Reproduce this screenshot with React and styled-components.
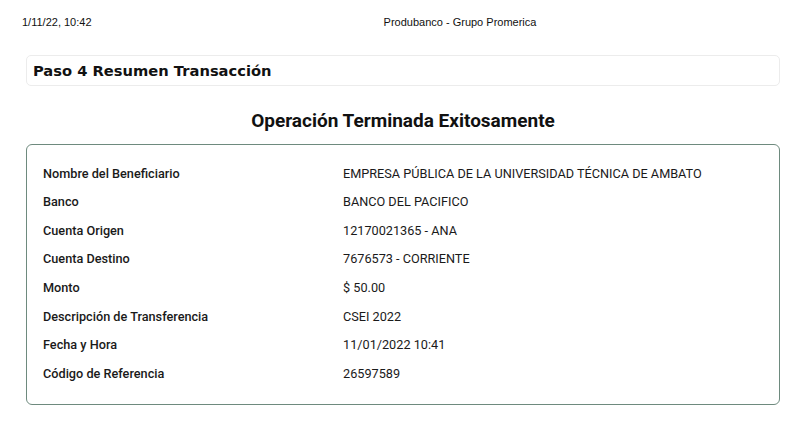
import React from "react";
import styled, { createGlobalStyle } from "styled-components";

const GlobalStyle = createGlobalStyle`
  html, body {
    margin: 0;
    padding: 0;
    background: #fff;
  }
  body {
    font-family: Roboto, "Liberation Sans", sans-serif;
    color: #111;
  }
`;

const Page = styled.div`
  width: 805px;
  height: 421px;
  padding: 14px 25px 0 22px;
  box-sizing: border-box;
`;

const PrintHeader = styled.div`
  display: grid;
  grid-template-columns: 1fr auto 1fr;
  align-items: center;
  font-family: "Liberation Sans", Arial, sans-serif;
  font-size: 11px;
  color: #111;
  height: 16px;
`;

const HeaderCenter = styled.span`
  justify-self: center;
  margin-left: 118px;
`;

const StepBox = styled.div`
  margin: 25px 0 0 4px;
  height: 31px;
  border: 1px solid #ececec;
  border-radius: 5px;
  display: flex;
  align-items: center;
  padding-left: 6px;
  box-sizing: border-box;
`;

const StepTitle = styled.h2`
  margin: 0;
  font-family: "DejaVu Sans", sans-serif;
  font-size: 14.7px;
  font-weight: 700;
  color: #111;
`;

const Title = styled.h1`
  margin: 23px 0 0 4px;
  text-align: center;
  font-family: Roboto, sans-serif;
  font-size: 19px;
  font-weight: 700;
  line-height: 24px;
  color: #111;
`;

const Card = styled.div`
  margin: 11px 0 0 4px;
  height: 261px;
  border: 1px solid #6e8a7e;
  border-radius: 6px;
  box-sizing: border-box;
  padding: 14px 16px 0 16px;
`;

const Row = styled.div`
  display: grid;
  grid-template-columns: 300px 1fr;
  height: 28.57px;
  align-items: center;
  font-size: 12.7px;
`;

const Label = styled.span`
  font-weight: 500;
  color: #1a1a1a;
`;

const Value = styled.span`
  font-weight: 400;
  color: #1a1a1a;
`;

const rows = [
  ["Nombre del Beneficiario", "EMPRESA PÚBLICA DE LA UNIVERSIDAD TÉCNICA DE AMBATO"],
  ["Banco", "BANCO DEL PACIFICO"],
  ["Cuenta Origen", "12170021365 - ANA"],
  ["Cuenta Destino", "7676573 - CORRIENTE"],
  ["Monto", "$ 50.00"],
  ["Descripción de Transferencia", "CSEI 2022"],
  ["Fecha y Hora", "11/01/2022 10:41"],
  ["Código de Referencia", "26597589"],
];

export default function App() {
  return (
    <>
      <GlobalStyle />
      <Page>
        <PrintHeader>
          <span>1/11/22, 10:42</span>
          <HeaderCenter>Produbanco - Grupo Promerica</HeaderCenter>
          <span />
        </PrintHeader>
        <StepBox>
          <StepTitle>Paso 4 Resumen Transacción</StepTitle>
        </StepBox>
        <Title>Operación Terminada Exitosamente</Title>
        <Card>
          {rows.map(([label, value]) => (
            <Row key={label}>
              <Label>{label}</Label>
              <Value>{value}</Value>
            </Row>
          ))}
        </Card>
      </Page>
    </>
  );
}
